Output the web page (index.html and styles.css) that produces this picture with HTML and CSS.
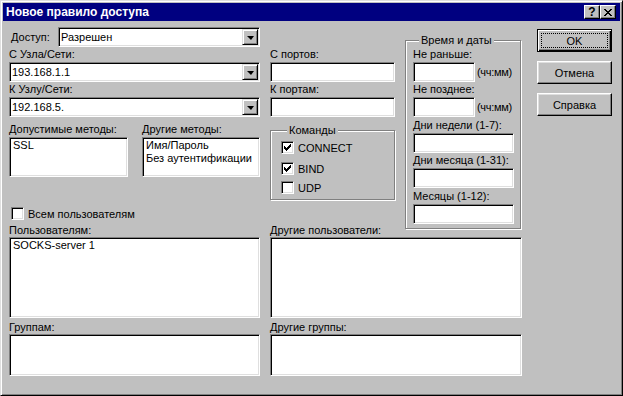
FILE: index.html
```html
<!DOCTYPE html>
<html lang="ru">

<head>
  <meta charset="UTF-8">
  <title>Новое правило доступа</title>
  <link rel="stylesheet" href="styles.css">
</head>

<body>

  <div class="dialog">
    <div class="titlebar">
      <h1>Новое правило доступа</h1>
      <span class="tbtn help">?</span>
      <span class="tbtn close">
        <svg width="8" height="7" viewBox="0 0 8 7">
          <path d="M0 0h2v1h-2z M6 0h2v1h-2z M1 1h2v1h-2z M5 1h2v1h-2z M2 2h4v1h-4z M3 3h2v1h-2z M2 4h4v1h-4z M1 5h2v1h-2z M5 5h2v1h-2z M0 6h2v1h-2z M6 6h2v1h-2z" fill="#000" />
        </svg>
      </span>
    </div>

    <div class="content">
      <div class="form">

        <div class="top">
          <!-- host / network column -->
          <div class="col-left">
            <div class="access-row">
              <label class="access-label">Доступ:</label>
              <div class="field combo access-combo">
                <span class="value">Разрешен</span>
                <span class="drop"><i></i></span>
              </div>
            </div>
            <label class="lbl">С Узла/Сети:</label>
            <div class="field combo">
              <span class="value">193.168.1.1</span>
              <span class="drop"><i></i></span>
            </div>
            <label class="lbl">К Узлу/Сети:</label>
            <div class="field combo">
              <span class="value">192.168.5.</span>
              <span class="drop"><i></i></span>
            </div>

            <div class="methods">
              <div class="mcol mcol-allowed">
                <label class="lbl">Допустимые методы:</label>
                <div class="field list short">
                  <div>SSL</div>
                </div>
              </div>
              <div class="mcol mcol-other">
                <label class="lbl">Другие методы:</label>
                <div class="field list short">
                  <div>Имя/Пароль</div>
                  <div>Без аутентификации</div>
                </div>
              </div>
            </div>

            <div class="check-row all-users">
              <span class="check"></span>
              <span>Всем пользователям</span>
            </div>
          </div>

          <!-- ports and commands -->
          <div class="col-mid">
            <label class="lbl first">С портов:</label>
            <div class="field input"></div>
            <label class="lbl">К портам:</label>
            <div class="field input"></div>

            <div class="group cmds">
              <span class="legend">Команды</span>
              <div class="check-row cmd-connect">
                <span class="check on">
                  <svg width="7" height="7" viewBox="0 0 7 7">
                    <path d="M0 2h1v3h-1z M1 3h1v3h-1z M2 4h1v3h-1z M3 3h1v3h-1z M4 2h1v3h-1z M5 1h1v3h-1z M6 0h1v3h-1z" fill="#000" />
                  </svg>
                </span>
                <span>CONNECT</span>
              </div>
              <div class="check-row cmd-bind">
                <span class="check on">
                  <svg width="7" height="7" viewBox="0 0 7 7">
                    <path d="M0 2h1v3h-1z M1 3h1v3h-1z M2 4h1v3h-1z M3 3h1v3h-1z M4 2h1v3h-1z M5 1h1v3h-1z M6 0h1v3h-1z" fill="#000" />
                  </svg>
                </span>
                <span>BIND</span>
              </div>
              <div class="check-row cmd-udp">
                <span class="check"></span>
                <span>UDP</span>
              </div>
            </div>
          </div>

          <!-- time and dates -->
          <div class="group times">
            <span class="legend">Время и даты</span>
            <label class="lbl">Не раньше:</label>
            <div class="time-row">
              <div class="field time"></div>
              <span class="hint">(чч:мм)</span>
            </div>
            <label class="lbl">Не позднее:</label>
            <div class="time-row">
              <div class="field time"></div>
              <span class="hint">(чч:мм)</span>
            </div>
            <label class="lbl tall">Дни недели (1-7):</label>
            <div class="field date"></div>
            <label class="lbl">Дни месяца (1-31):</label>
            <div class="field date"></div>
            <label class="lbl tall">Месяцы (1-12):</label>
            <div class="field date"></div>
          </div>
        </div>

        <!-- users and groups -->
        <div class="bottom">
          <div class="ucol">
            <label class="blbl">Пользователям:</label>
            <div class="field list users">
              <div>SOCKS-server 1</div>
            </div>
            <label class="blbl second">Группам:</label>
            <div class="field list groups"></div>
          </div>
          <div class="ucol">
            <label class="blbl">Другие пользователи:</label>
            <div class="field list users"></div>
            <label class="blbl second">Другие группы:</label>
            <div class="field list groups"></div>
          </div>
        </div>
      </div>

      <div class="buttons">
        <div class="btn default"><span class="focus">OK</span></div>
        <div class="btn"><span>Отмена</span></div>
        <div class="btn"><span>Справка</span></div>
      </div>
    </div>
  </div>

</body>

</html>
```

FILE: styles.css
```css
* {
  box-sizing: border-box;
}

body {
  margin: 0;
  background: #c0c0c0;
  font-family: "Liberation Sans", Arial, sans-serif;
  font-size: 11px;
  color: #000;
}

/* window frame */
.dialog {
  width: 623px;
  height: 396px;
  background: #c0c0c0;
  border: 1px solid;
  border-color: #dfdfdf #000 #000 #dfdfdf;
  box-shadow: inset 1px 1px #fff, inset -1px -1px #808080;
  padding: 2px;
}

.titlebar {
  height: 18px;
  background: #000080;
  color: #fff;
  display: flex;
  align-items: center;
  padding: 0 4px 0 3px;
}

.titlebar h1 {
  flex: 1;
  margin: 0;
  font-size: 12px;
  font-weight: bold;
}

.tbtn {
  width: 16px;
  height: 14px;
  display: flex;
  align-items: center;
  justify-content: center;
  color: #000;
  font-weight: bold;
  font-size: 12px;
  background: #c0c0c0;
  border: 1px solid;
  border-color: #fff #000 #000 #fff;
  box-shadow: inset -1px -1px #808080;
}

.content {
  display: flex;
  padding: 6px 0 0 6px;
}

.form {
  width: 513px;
}

.top {
  display: flex;
  gap: 10px;
  height: 197px;
}

/* sunken white field */
.field {
  background: #fff;
  border: 1px solid;
  border-color: #808080 #fff #fff #808080;
  box-shadow: inset 1px 1px #000, inset -1px -1px #dfdfdf;
}

.lbl {
  display: block;
  height: 15px;
  line-height: 15px;
  white-space: nowrap;
}

.lbl.tall {
  height: 16px;
  line-height: 17px;
}

.col-left {
  width: 251px;
  display: flex;
  flex-direction: column;
}

.access-row {
  display: flex;
  align-items: center;
  height: 20px;
}

.access-label {
  padding-left: 2px;
}

.combo {
  height: 20px;
  display: flex;
  align-items: center;
  padding: 1px;
}

.access-combo {
  width: 202px;
  margin-left: auto;
}

.combo .value {
  flex: 1;
  padding-left: 1px;
}

.drop {
  width: 16px;
  height: 16px;
  display: flex;
  align-items: center;
  justify-content: center;
  background: #c0c0c0;
  border: 1px solid;
  border-color: #dfdfdf #000 #000 #dfdfdf;
  box-shadow: inset 1px 1px #fff, inset -1px -1px #808080;
}

.drop i {
  width: 0;
  height: 0;
  border-left: 4px solid transparent;
  border-right: 3px solid transparent;
  border-top: 4px solid #000;
  margin-top: 1px;
}

.methods {
  display: flex;
  gap: 14px;
  margin-top: 5px;
}

.mcol-allowed {
  width: 119px;
}

.mcol-other {
  width: 118px;
}

.list {
  padding: 1px 3px;
  line-height: 13px;
}

.list.short {
  height: 40px;
}

.check-row {
  display: flex;
  align-items: center;
  gap: 4px;
  height: 13px;
}

.check {
  width: 13px;
  height: 13px;
  display: flex;
  align-items: center;
  justify-content: center;
  background: #fff;
  border: 1px solid;
  border-color: #808080 #fff #fff #808080;
  box-shadow: inset 1px 1px #000, inset -1px -1px #dfdfdf;
}

.all-users {
  margin: 30px 0 0 2px;
}

.col-mid {
  width: 125px;
  display: flex;
  flex-direction: column;
}

.lbl.first {
  margin-top: 20px;
}

.input {
  height: 20px;
}

/* etched group box */
.group {
  border: 1px solid #808080;
  box-shadow: 1px 1px #fff, inset 1px 1px #fff;
  display: flex;
  flex-direction: column;
}

.legend {
  align-self: flex-start;
  height: 13px;
  line-height: 13px;
  margin: -7px 0 0 6px;
  padding: 0 2px;
  background: #c0c0c0;
}

.cmds {
  margin-top: 13px;
  height: 70px;
  padding-left: 10px;
}

.cmd-connect {
  margin-top: 4px;
}

.cmd-bind {
  margin-top: 8px;
}

.cmd-udp {
  margin-top: 6px;
}

.times {
  width: 116px;
  height: 189px;
  margin-top: 13px;
  padding-left: 7px;
}

.time-row {
  display: flex;
  align-items: center;
  gap: 2px;
}

.time {
  width: 62px;
  height: 20px;
}

.hint {
  letter-spacing: -0.3px;
}

.date {
  width: 101px;
  height: 20px;
}

.bottom {
  display: grid;
  grid-template-columns: 251px 252px;
  column-gap: 10px;
}

.blbl {
  display: block;
  height: 13px;
  line-height: 13px;
}

.blbl.second {
  margin-top: 3px;
}

.users {
  height: 81px;
}

.groups {
  height: 42px;
}

.buttons {
  display: flex;
  flex-direction: column;
  gap: 9px;
  margin: 2px 0 0 15px;
}

.btn {
  width: 75px;
  height: 23px;
  display: flex;
  align-items: center;
  justify-content: center;
  background: #c0c0c0;
  border: 1px solid;
  border-color: #fff #000 #000 #fff;
  box-shadow: inset -1px -1px #808080, inset 1px 1px #dfdfdf;
}

.btn.default {
  padding: 3px;
  border-color: #000;
  box-shadow: inset 1px 1px #fff, inset -1px -1px #000, inset -2px -2px #808080;
}

.focus {
  flex: 1;
  align-self: stretch;
  display: flex;
  align-items: center;
  justify-content: center;
  border: 1px dotted #000;
}
```
